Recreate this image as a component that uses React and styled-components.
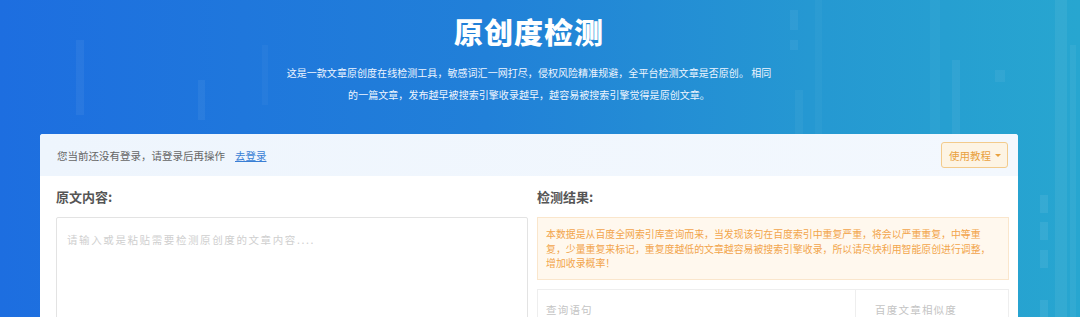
import React from "react";
import styled, { createGlobalStyle } from "styled-components";

const GlobalStyle = createGlobalStyle`
  html, body {
    margin: 0;
    padding: 0;
  }
  body {
    font-family: "Noto Sans CJK SC", "Noto Sans", sans-serif;
    background: linear-gradient(90deg, #1d6ee0 0%, #2180d8 45%, #2598d2 75%, #27a6d0 100%);
    min-height: 317px;
    overflow: hidden;
  }
`;

const Page = styled.div`
  position: relative;
  width: 1080px;
  min-height: 317px;
  overflow: hidden;
`;

// faint chart bars drawn behind the hero
const Backdrop = styled.svg`
  position: absolute;
  left: 0;
  top: 0;
  pointer-events: none;
`;

const Container = styled.div`
  position: relative;
  width: 978px;
  margin-left: 40px;
`;

const Hero = styled.header`
  display: flex;
  flex-direction: column;
  align-items: center;
  padding-top: 9px;
  height: 134px;
  box-sizing: border-box;
`;

const Title = styled.h1`
  margin: 0;
  font-size: 29px;
  line-height: 44px;
  font-weight: 900;
  color: #fff;
  letter-spacing: 1px;
`;

const Intro = styled.p`
  margin: 9px 0 0;
  width: 490px;
  font-size: 10px;
  line-height: 22px;
  color: #eef5ff;
  text-align: center;
  letter-spacing: 0.05px;
`;

const Card = styled.section`
  background: #fff;
  border-radius: 3px 3px 0 0;
  min-height: 260px;
`;

const LoginBar = styled.div`
  display: flex;
  align-items: center;
  justify-content: space-between;
  height: 42px;
  padding: 0 10px 0 17px;
  background: linear-gradient(90deg, #eef5fd, #f3f8fe);
  border-radius: 3px 3px 0 0;
`;

const Notice = styled.span`
  font-size: 10.5px;
  color: #666;
`;

const LoginLink = styled.a`
  margin-left: 10px;
  color: #3a7fd5;
  text-decoration: underline;
  cursor: pointer;
`;

const GuideButton = styled.button`
  display: flex;
  align-items: center;
  gap: 4px;
  height: 26px;
  padding: 0 6px 0 7px;
  border: 1px solid #f3cb8c;
  border-radius: 3px;
  background: #fdf4e4;
  color: #e9a13e;
  font-family: inherit;
  font-size: 10.5px;
  cursor: pointer;
`;

const Caret = styled.span`
  width: 0;
  height: 0;
  border-left: 3px solid transparent;
  border-right: 3px solid transparent;
  border-top: 3px solid #e9a13e;
`;

const Columns = styled.div`
  display: grid;
  grid-template-columns: 472px 472px;
  column-gap: 9px;
  padding: 12px 9px 0 16px;
`;

const Column = styled.div`
  display: flex;
  flex-direction: column;
`;

const Heading = styled.h2`
  margin: 0 0 11px;
  font-size: 13px;
  line-height: 18px;
  font-weight: ${(p) => (p.$strong ? 700 : 600)};
  color: #555;
`;

const Editor = styled.textarea`
  box-sizing: border-box;
  width: 100%;
  height: 200px;
  padding: 14px 10px;
  border: 1px solid #e3e3e3;
  border-radius: 2px;
  resize: none;
  font-family: inherit;
  font-size: 10.5px;
  letter-spacing: 1.6px;
  color: #333;
  outline: none;

  &::placeholder {
    color: #cfcfcf;
  }
`;

const Warning = styled.div`
  box-sizing: border-box;
  padding: 9px 8px 8px;
  background: #fff8ee;
  border: 1px solid #fae6cc;
  color: #f2a54b;
  font-size: 9.9px;
  line-height: 14.5px;
  white-space: nowrap;
`;

const ResultTable = styled.div`
  display: grid;
  grid-template-columns: 317px 1fr;
  margin-top: 9px;
  border: 1px solid #eeeeee;
  border-bottom: none;
  height: 40px;
`;

const HeadCell = styled.div`
  display: flex;
  align-items: center;
  justify-content: ${(p) => (p.$right ? "flex-end" : "flex-start")};
  padding: 0 ${(p) => (p.$right ? "51px" : "8px")} 0 8px;
  font-size: 10.5px;
  letter-spacing: 1.2px;
  color: #c4c4c4;
  border-left: ${(p) => (p.$right ? "1px solid #eeeeee" : "none")};
`;

const bars = [
  { x: 76, y: 40, w: 8, h: 75, o: 0.05 },
  { x: 198, y: 80, w: 7, h: 40, o: 0.05 },
  { x: 262, y: 45, w: 6, h: 60, o: 0.03 },
  { x: 790, y: 10, w: 8, h: 20, o: 0.05 },
  { x: 790, y: 40, w: 8, h: 10, o: 0.05 },
  { x: 795, y: 90, w: 8, h: 227, o: 0.04 },
  { x: 815, y: 0, w: 7, h: 317, o: 0.03 },
  { x: 930, y: 0, w: 10, h: 317, o: 0.03 },
  { x: 952, y: 60, w: 8, h: 257, o: 0.05 },
  { x: 995, y: 70, w: 10, h: 12, o: 0.05 },
  { x: 1040, y: 195, w: 8, h: 18, o: 0.07 },
  { x: 1040, y: 222, w: 8, h: 18, o: 0.07 },
  { x: 1040, y: 250, w: 8, h: 18, o: 0.07 },
  { x: 1040, y: 300, w: 8, h: 17, o: 0.07 },
  { x: 1055, y: 0, w: 12, h: 317, o: 0.06 },
  { x: 1070, y: 45, w: 6, h: 272, o: 0.05 },
];

export default function App() {
  return (
    <>
      <GlobalStyle />
      <Page>
        <Backdrop width="1080" height="317" viewBox="0 0 1080 317">
          {bars.map((b, i) => (
            <rect key={i} x={b.x} y={b.y} width={b.w} height={b.h} fill="#ffffff" opacity={b.o} />
          ))}
        </Backdrop>
        <Container>
          <Hero>
            <Title>原创度检测</Title>
            <Intro>
              这是一款文章原创度在线检测工具，敏感词汇一网打尽，侵权风险精准规避，全平台检测文章是否原创。 相同的一篇文章，发布越早被搜索引擎收录越早，越容易被搜索引擎觉得是原创文章。
            </Intro>
          </Hero>
          <Card>
            <LoginBar>
              <Notice>
                您当前还没有登录，请登录后再操作
                <LoginLink>去登录</LoginLink>
              </Notice>
              <GuideButton>
                使用教程
                <Caret />
              </GuideButton>
            </LoginBar>
            <Columns>
              <Column>
                <Heading $strong>原文内容:</Heading>
                <Editor placeholder="请输入或是粘贴需要检测原创度的文章内容...." />
              </Column>
              <Column>
                <Heading>检测结果:</Heading>
                <Warning>
                  本数据是从百度全网索引库查询而来，当发现该句在百度索引中重复严重，将会以严重重复，中等重
                  <br />
                  复，少量重复来标记，重复度越低的文章越容易被搜索引擎收录，所以请尽快利用智能原创进行调整，
                  <br />
                  增加收录概率！
                </Warning>
                <ResultTable>
                  <HeadCell>查询语句</HeadCell>
                  <HeadCell $right>百度文章相似度</HeadCell>
                </ResultTable>
              </Column>
            </Columns>
          </Card>
        </Container>
      </Page>
    </>
  );
}
